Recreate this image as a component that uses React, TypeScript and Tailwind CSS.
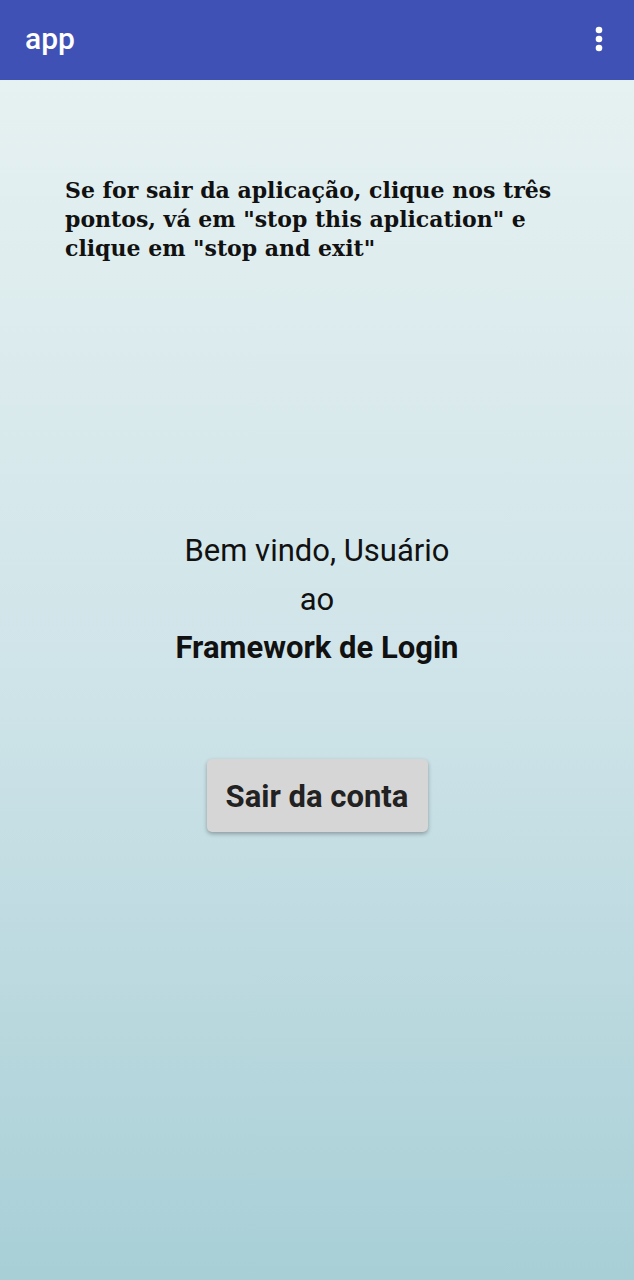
import React from "react";

export default function App() {
  return (
    <div className="w-[634px] h-[1280px] flex flex-col overflow-hidden" style={{ fontFamily: "Roboto, 'Liberation Sans', sans-serif" }}>
      <header className="h-[80px] shrink-0 bg-[#3f51b5] flex items-center justify-between pl-[25px] pr-[30px] shadow-[0_2px_3px_rgba(0,0,0,0.15)]">
        <span className="text-white text-[30px] font-medium leading-none pb-[2px]" style={{ fontFamily: "Roboto, sans-serif" }}>app</span>
        <svg width="10" height="26" viewBox="0 0 10 26" className="mb-[3px]">
          <circle cx="5" cy="4" r="3.3" fill="white" />
          <circle cx="5" cy="13" r="3.3" fill="white" />
          <circle cx="5" cy="22" r="3.3" fill="white" />
        </svg>
      </header>
      <main className="flex-1 flex flex-col bg-gradient-to-b from-[#e6f1f1] via-[#cfe4e9] to-[#a8cfd6]">
        <p className="mt-[96px] ml-[65px] mr-[40px] text-[22px] leading-[29px] font-bold text-[#111]" style={{ fontFamily: "'DejaVu Serif', 'Liberation Serif', serif" }}>
          Se for sair da aplicação, clique nos três pontos, vá em "stop this aplication" e clique em "stop and exit"
        </p>
        <div className="mt-[270px] flex flex-col items-center text-[#111]">
          <div className="text-[31px] leading-[36px]">Bem vindo, Usuário</div>
          <div className="text-[31px] leading-[36px] mt-[13px]">ao</div>
          <div className="text-[31px] leading-[36px] mt-[12px] font-bold">Framework de Login</div>
          <button className="mt-[93px] w-[221px] h-[73px] pt-[4px] bg-[#d6d6d6] rounded-[5px] shadow-[0_2px_4px_rgba(0,0,0,0.3)] text-[31px] font-bold text-[#222]">
            Sair da conta
          </button>
        </div>
      </main>
    </div>
  );
}
